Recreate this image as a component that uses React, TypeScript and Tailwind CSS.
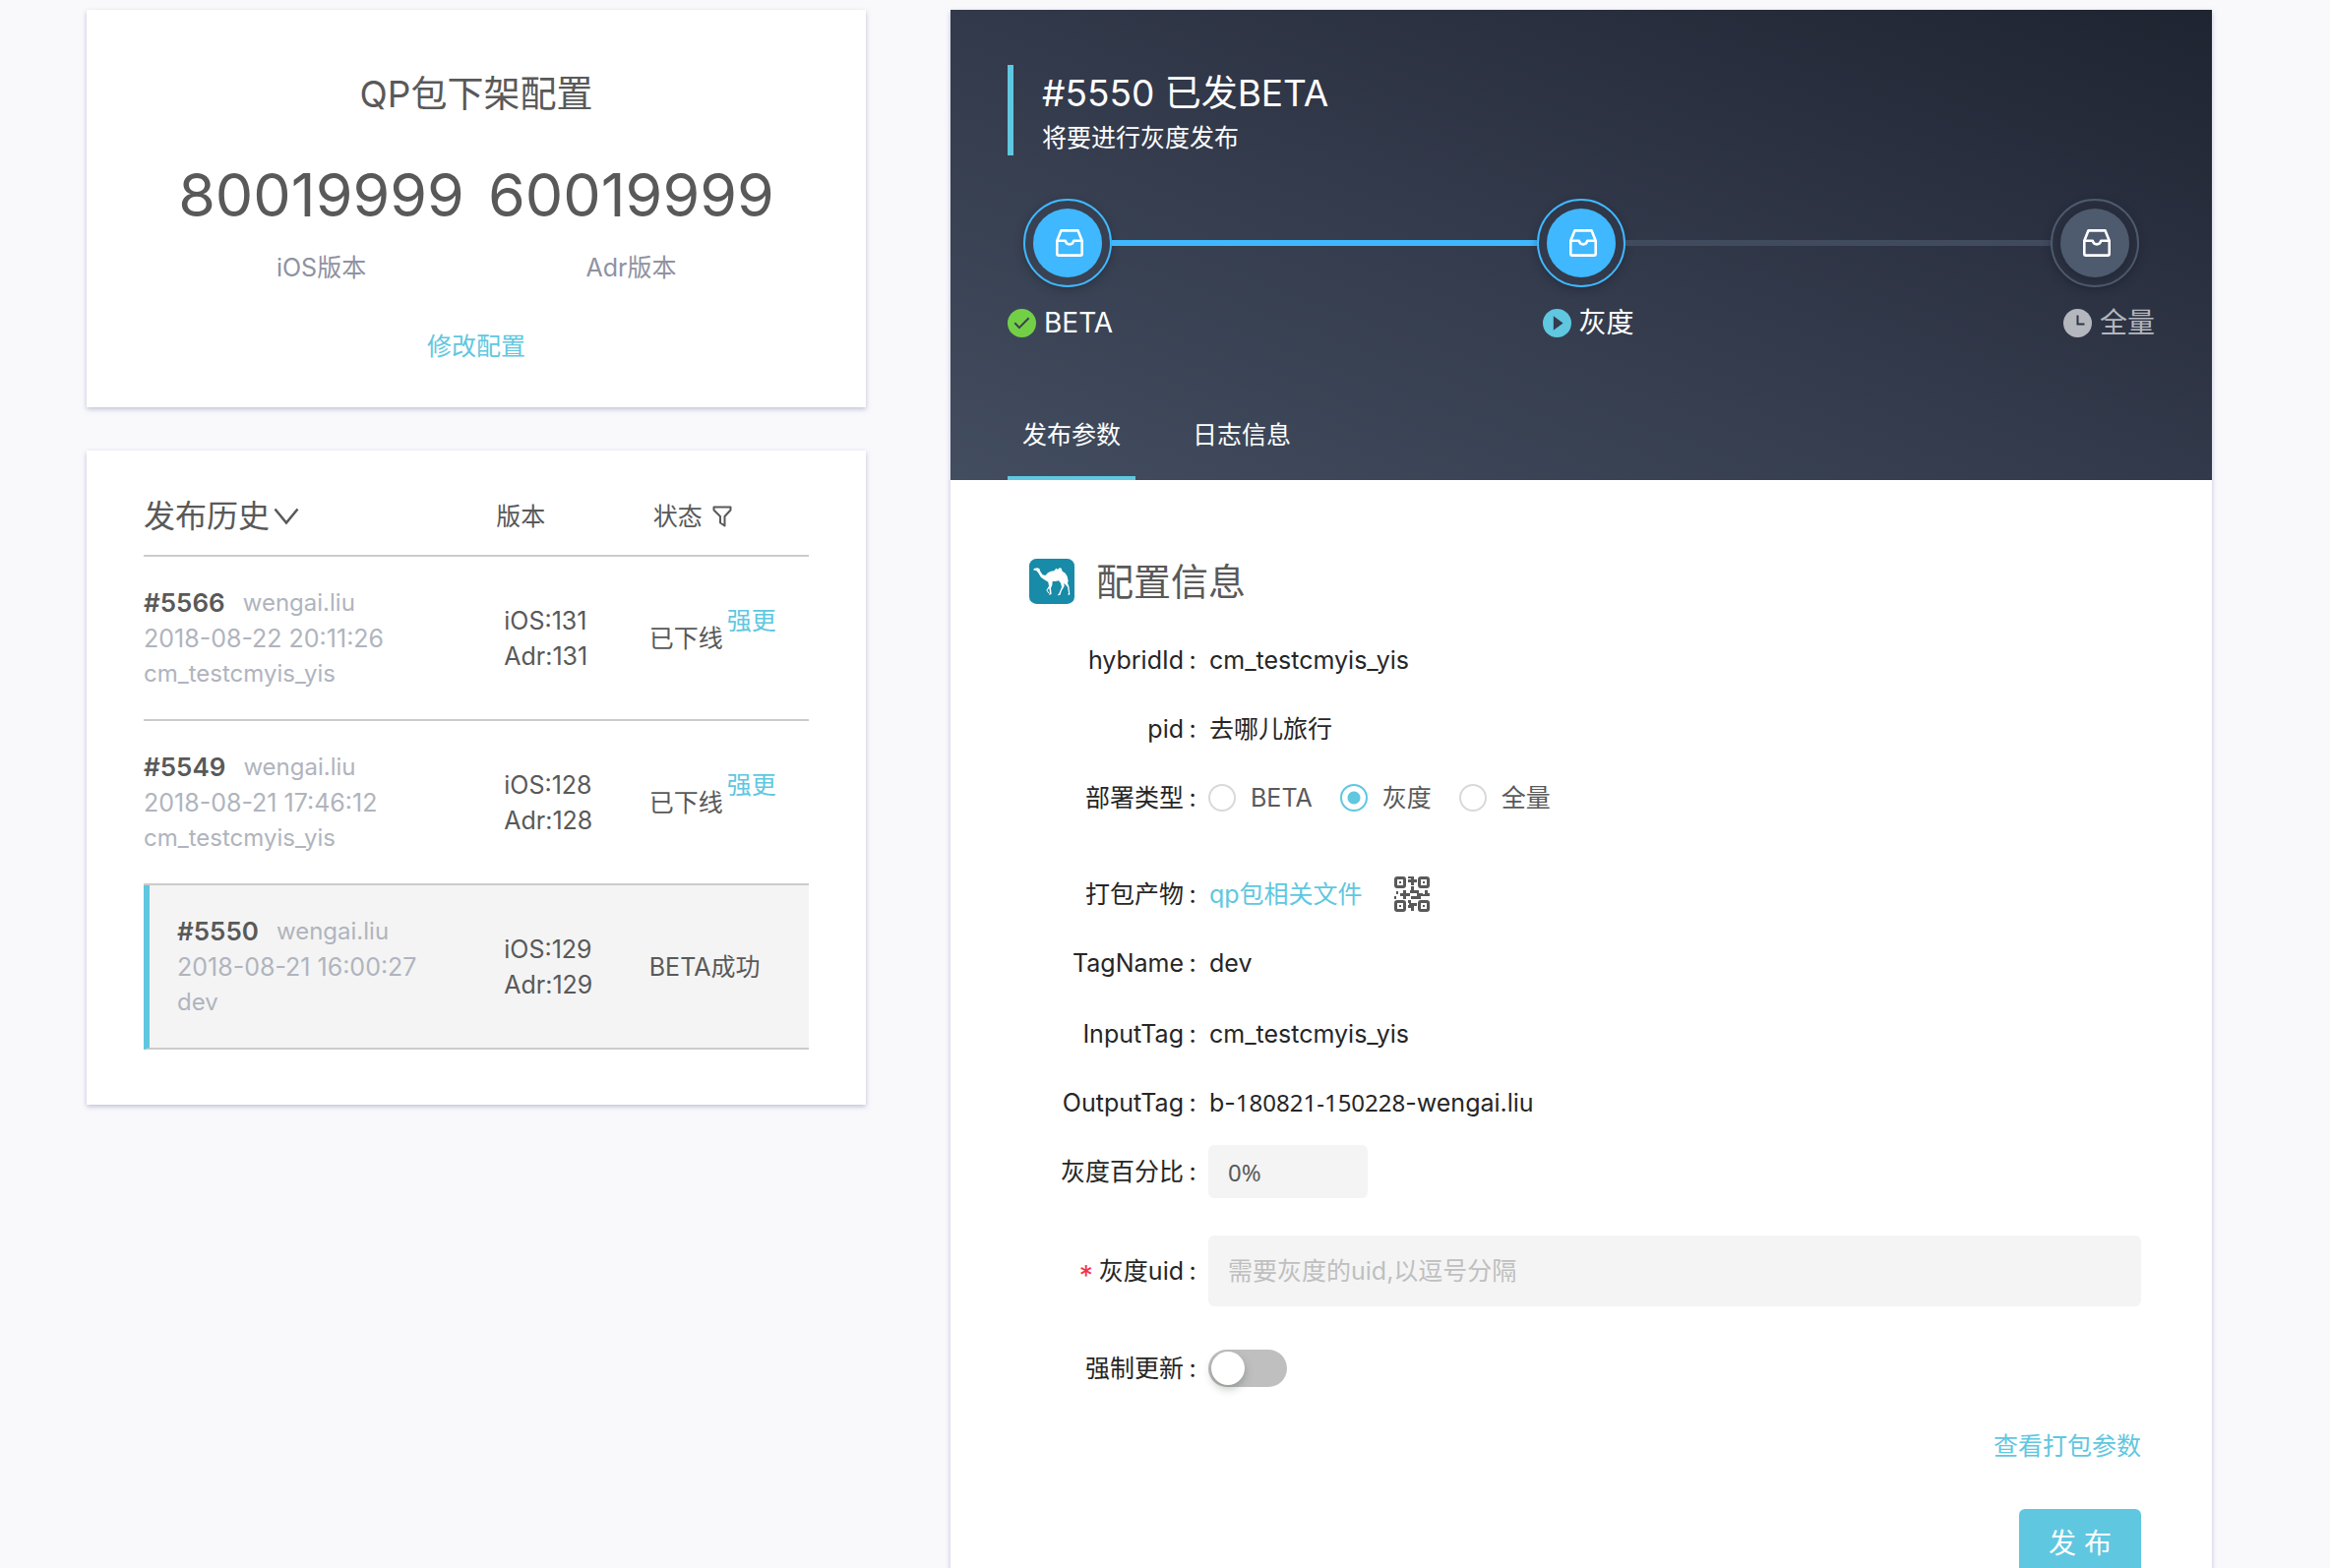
import React, { useState } from "react";

const SANS = "font-['Inter','Noto_Sans_CJK_SC',sans-serif]";

function InboxIcon() {
  return (
    <svg viewBox="0 0 28 28" className="ml-1 size-7" fill="none" stroke="#fff" strokeWidth="2.6" strokeLinejoin="round" aria-hidden="true">
      <path d="M5.4 1.4H22.6L26.7 11.8V25a1.6 1.6 0 0 1-1.6 1.6H2.9A1.6 1.6 0 0 1 1.3 25V11.8Z" />
      <path d="M1.3 11.8H9.8c.5 2.3 2.1 3.6 4.2 3.6s3.7-1.3 4.2-3.6h8.5" />
    </svg>
  );
}

function CheckBadge() {
  return (
    <svg viewBox="0 0 29 29" className="size-[29px]" aria-hidden="true">
      <circle cx="14.5" cy="14.5" r="14.5" fill="#73d046" />
      <path d="M7.3 14.2l4.6 4.9L21.6 9.2" fill="none" stroke="#3a4152" strokeWidth="2" />
    </svg>
  );
}

function PlayBadge() {
  return (
    <svg viewBox="0 0 29 29" className="size-[29px]" aria-hidden="true">
      <circle cx="14.5" cy="14.5" r="14.5" fill="#60c7e0" />
      <path d="M10.8 7.2v14.6L20.6 14.5Z" fill="#343b4b" />
    </svg>
  );
}

function ClockBadge() {
  return (
    <svg viewBox="0 0 29 29" className="size-[29px]" aria-hidden="true">
      <circle cx="14.5" cy="14.5" r="14.5" fill="#b4b7bd" />
      <path d="M14.5 6.4v9.2h7" fill="none" stroke="#2f3545" strokeWidth="2" />
    </svg>
  );
}

function CamelLogo() {
  return (
    <svg viewBox="0 0 138 138" className="size-[46px]" aria-hidden="true">
      <rect width="138" height="138" rx="22" fill="#178ba7" />
      <path
        fill="#fff"
        d="M12 34L15 30L24 28L31 30L34 39L41 49L49 51L57 43L66 38L76 37L82 29L87 33L92 28L98 29L101 38L110 44L116 54L119 68L117 74L121 84L124 108L121 112L118 109L120 104L117 86L106 74L107 84L99 97L94 111L86 112L91 106L99 86L96 74L90 67L80 69L71 69L70 80L66 90L68 108L60 111L63 104L61 90L55 96L62 106L58 105L52 96L60 84L58 71L46 64L36 57L27 42L22 37Z"
      />
    </svg>
  );
}

function QrIcon() {
  return (
    <svg viewBox="0 0 36 36" className="size-9" fill="#595959" aria-hidden="true">
      <g fill="none" stroke="#595959" strokeWidth="3">
        <rect x="1.5" y="1.5" width="9" height="9" rx="1.5" />
        <rect x="25.5" y="1.5" width="9" height="9" rx="1.5" />
        <rect x="1.5" y="25.5" width="9" height="9" rx="1.5" />
        <rect x="25.5" y="25.5" width="9" height="9" rx="1.5" />
      </g>
      <path d="M5 5h2v2H5zM29 5h2v2h-2zM5 29h2v2H5zM29 29h2v2h-2z" />
      <path d="M14 0h6v3h3v3h-3v3h-3V6h-3V3h3V2h-3z" />
      <path d="M0 20h2v3H0zM2 15h2v3H2zM6 17h3v-3h3v3h4v3h-4v3H9v-3H6z" />
      <path d="M17 10h3v4h5v3h4v3h-2v3H17v-3h6v-3h-7v-3h1z" />
      <path d="M29 18h2v-4h3v3h2v3h-7z" />
      <path d="M14 24h3v3h6v3h-3v5h-3v-3h-3v-3h1v-2h-1z" />
    </svg>
  );
}

function ChevronIcon() {
  return (
    <svg viewBox="0 0 26 18" className="ml-1 h-[18px] w-[26px]" fill="none" stroke="#595959" strokeWidth="2.6" aria-hidden="true">
      <path d="M1.5 1.5L13 15.5L24.5 1.5" />
    </svg>
  );
}

function FilterIcon() {
  return (
    <svg viewBox="0 0 20 22" className="h-[22px] w-5" fill="none" stroke="#595959" strokeWidth="2" strokeLinejoin="round" aria-hidden="true">
      <path d="M1.5 1.5h17v3L12.5 11v9.5L8 17.5V11L1.5 4.5Z" />
    </svg>
  );
}

const history = [
  { id: "#5566", user: "wengai.liu", time: "2018-08-22 20:11:26", tag: "cm_testcmyis_yis", ver: "131", status: "已下线", force: true, active: false },
  { id: "#5549", user: "wengai.liu", time: "2018-08-21 17:46:12", tag: "cm_testcmyis_yis", ver: "128", status: "已下线", force: true, active: false },
  { id: "#5550", user: "wengai.liu", time: "2018-08-21 16:00:27", tag: "dev", ver: "129", status: "BETA成功", force: false, active: true },
];

function OfflineConfig() {
  return (
    <section className="bg-white pt-[58px] pb-11 text-center shadow-[0_2px_5px_rgba(80,90,140,0.35)]">
      <h2 className="text-[37px] leading-[56px] text-[#595959]">QP包下架配置</h2>
      <dl className="mt-[34px] flex justify-center gap-6">
        {[["80019999", "iOS版本"], ["60019999", "Adr版本"]].map(([num, name]) => (
          <div key={name} className="flex flex-col-reverse">
            <dt className="mt-4 text-[25px] leading-9 text-[#8f92a1]">{name}</dt>
            <dd className="text-[61px] leading-[80px] text-[#595959]">{num}</dd>
          </div>
        ))}
      </dl>
      <button type="button" className="mt-11 cursor-pointer text-[25px] leading-9 text-[#60c7e0]">修改配置</button>
    </section>
  );
}

function History() {
  return (
    <section className="bg-white px-[58px] pt-7 pb-14 shadow-[0_2px_5px_rgba(80,90,140,0.35)]">
      <table className="w-full table-fixed border-separate border-spacing-0 text-left text-[25px] leading-9 text-[#595959]">
        <colgroup>
          <col className="w-[53%]" />
          <col className="w-[23%]" />
          <col className="w-[24%]" />
        </colgroup>
        <thead>
          <tr className="h-20">
            <th className="border-b-2 border-[#cbcbcb] font-normal">
              <button type="button" className="flex cursor-pointer items-center text-[32px]">
                发布历史
                <ChevronIcon />
              </button>
            </th>
            <th className="border-b-2 border-[#cbcbcb] font-normal">版本</th>
            <th className="border-b-2 border-[#cbcbcb] font-normal">
              <button type="button" className="flex cursor-pointer items-center gap-2.5 pl-1">
                状态
                <FilterIcon />
              </button>
            </th>
          </tr>
        </thead>
        <tbody>
          {history.map((h) => (
            <tr key={h.id} className={h.active ? "h-[167px] bg-[#f4f4f4]" : "h-[167px]"}>
              <td className={h.active ? "border-b-2 border-l-6 border-b-[#cbcbcb] border-l-[#60c7e0] pl-7" : "border-b-2 border-[#cbcbcb]"}>
                <div className="flex gap-[18px]">
                  <span className="text-[26px] font-semibold">{h.id}</span>
                  <span className="text-2xl leading-9 text-[#b0b4bd]">{h.user}</span>
                </div>
                <div className="text-[#b0b4bd]">{h.time}</div>
                <div className="text-2xl leading-9 text-[#b0b4bd]">{h.tag}</div>
              </td>
              <td className="border-b-2 border-[#cbcbcb] pl-2">
                <div>iOS:{h.ver}</div>
                <div>Adr:{h.ver}</div>
              </td>
              <td className="border-b-2 border-[#cbcbcb]">
                <div className="flex items-center gap-1">
                  <span>{h.status}</span>
                  {h.force && (
                    <a href="#force" className="block h-[72px] text-[#60c7e0]">强更</a>
                  )}
                </div>
              </td>
            </tr>
          ))}
        </tbody>
      </table>
    </section>
  );
}

function StepDot({ done }: { done: boolean }) {
  return (
    <div className={done ? "shrink-0 rounded-full border-2 border-[#3fb8ff] p-2 shadow-[0_3px_8px_rgba(20,24,36,0.35)]" : "shrink-0 rounded-full border-2 border-[#4e5a6e] p-2 shadow-[0_3px_8px_rgba(20,24,36,0.35)]"}>
      <div className={done ? "flex size-[70px] items-center justify-center rounded-full bg-[#3fb8ff]" : "flex size-[70px] items-center justify-center rounded-full bg-[#4e5a6e] shadow-[0_3px_8px_rgba(20,24,36,0.35)]"}>
        <InboxIcon />
      </div>
    </div>
  );
}

function ReleaseHeader() {
  return (
    <header className="bg-linear-to-tr from-[#424d5f] via-[#32394a] to-[#1f2431] px-[58px] pt-14 text-white">
      <div className="border-l-6 border-[#60c7e0] pb-0.5 pl-[29px]">
        <h1 className="text-[37px] leading-[58px]">#5550 已发BETA</h1>
        <p className="text-[25px] leading-8">将要进行灰度发布</p>
      </div>
      <div className="mt-11 flex items-center px-4">
        <StepDot done />
        <div className="h-1.5 flex-1 bg-[#3fb8ff]" />
        <StepDot done />
        <div className="h-1.5 flex-1 bg-[#404b5e]" />
        <StepDot done={false} />
      </div>
      <div className="mt-4 flex justify-between text-[28px] leading-10">
        <span className="flex items-center gap-2"><CheckBadge />BETA</span>
        <span className="flex items-center gap-2"><PlayBadge />灰度</span>
        <span className="flex items-center gap-2 text-[#b4b7bd]"><ClockBadge />全量</span>
      </div>
      <nav className="mt-[52px] flex gap-[43px] text-[25px] leading-[84px]" role="tablist">
        <button type="button" role="tab" aria-selected="true" className="cursor-pointer border-b-4 border-[#60c7e0] px-[15px]">发布参数</button>
        <button type="button" role="tab" aria-selected="false" className="cursor-pointer border-b-4 border-transparent px-[15px]">日志信息</button>
      </nav>
    </header>
  );
}

function Row({ label, htmlFor, required, children }: { label: string; htmlFor?: string; required?: boolean; children: React.ReactNode }) {
  return (
    <div className="flex min-h-[70px] items-center">
      <label htmlFor={htmlFor} className="flex w-[204px] shrink-0 items-center justify-end text-[#262626]">
        {required && <span className="mr-1.5 pt-2.5 text-[28px] text-[#f5324a]">*</span>}
        {label}
        <span className="mr-3 ml-[5px] w-2 text-center">:</span>
      </label>
      {children}
    </div>
  );
}

function ReleaseForm() {
  const [type, setType] = useState("灰度");
  return (
    <form className="pt-[74px] pr-[72px] pl-[58px] text-[25px] leading-9 text-[#262626]" onSubmit={(e) => e.preventDefault()}>
      <h2 className="mb-4 flex items-center gap-[22px] pl-[22px] text-[38px] leading-[58px] text-[#595959]">
        <CamelLogo />
        配置信息
      </h2>
      <Row label="hybridId"><span className="pl-px">cm_testcmyis_yis</span></Row>
      <Row label="pid"><span className="pl-px">去哪儿旅行</span></Row>
      <Row label="部署类型">
        <div role="radiogroup" aria-label="部署类型" className="flex gap-7 text-[#595959]">
          {["BETA", "灰度", "全量"].map((t) => (
            <label key={t} className="flex cursor-pointer items-center gap-[15px]">
              <input
                type="radio"
                name="deploy"
                checked={type === t}
                onChange={() => setType(t)}
                className="size-7 appearance-none rounded-full border-2 border-[#d9d9d9] bg-white checked:border-[#60c7e0] checked:bg-radial checked:from-[#60c7e0] checked:from-[6px] checked:to-white checked:to-[7px]"
              />
              {t}
            </label>
          ))}
        </div>
      </Row>
      <div className="pt-7">
        <Row label="打包产物">
          <a href="#files" className="pl-px text-[#60c7e0]">qp包相关文件</a>
          <button type="button" aria-label="二维码" className="ml-8 cursor-pointer"><QrIcon /></button>
        </Row>
      </div>
      <Row label="TagName"><span className="pl-px">dev</span></Row>
      <div className="pt-0.5">
        <Row label="InputTag"><span className="pl-px">cm_testcmyis_yis</span></Row>
      </div>
      <Row label="OutputTag">
        <span className="pl-px">b-<span className="font-['Noto_Sans'] text-2xl">180821-150228</span>-wengai.liu</span>
      </Row>
      <Row label="灰度百分比" htmlFor="percent">
        <input id="percent" type="text" defaultValue="0%" className="h-[54px] w-[162px] rounded-md bg-[#f4f4f4] px-5 font-['Noto_Sans'] text-2xl text-[#595959] outline-none" />
      </Row>
      <div className="pt-[30px]">
        <Row label="灰度uid" htmlFor="uid" required>
          <input id="uid" type="text" placeholder="需要灰度的uid,以逗号分隔" className="h-[72px] min-w-0 flex-1 rounded-md bg-[#f4f4f4] px-5 text-[#595959] outline-none placeholder:text-[#bfbfbf]" />
        </Row>
      </div>
      <div className="pt-7">
        <Row label="强制更新" htmlFor="force">
          <span className="relative inline-flex h-[38px] w-20">
            <input id="force" type="checkbox" role="switch" className="peer size-full cursor-pointer appearance-none rounded-full bg-[#bfbfbf] checked:bg-[#60c7e0]" />
            <span className="pointer-events-none absolute top-0.5 left-[3px] size-[34px] rounded-full bg-white shadow-[0_4px_8px_rgba(0,35,11,0.25)] peer-checked:left-[43px]" />
          </span>
        </Row>
      </div>
      <div className="mt-[26px] flex flex-col items-end gap-[46px] pb-14">
        <a href="#params" className="text-[#60c7e0]">查看打包参数</a>
        <button type="submit" className="h-[70px] w-[124px] cursor-pointer rounded-md bg-[#60c7e0] text-[28px] text-white">发 布</button>
      </div>
    </form>
  );
}

export default function App() {
  return (
    <div className={`${SANS} h-screen overflow-y-auto bg-[#f9f9fc] [scrollbar-width:none]`}>
      <main className="grid grid-cols-[792fr_1282fr] items-start gap-x-[86px] pt-2.5 pr-[120px] pl-[88px]">
        <div className="flex min-w-0 flex-col gap-11">
          <OfflineConfig />
          <History />
        </div>
        <article className="min-w-0 bg-white shadow-[0_2px_5px_rgba(80,90,140,0.35)]">
          <ReleaseHeader />
          <ReleaseForm />
        </article>
      </main>
    </div>
  );
}
